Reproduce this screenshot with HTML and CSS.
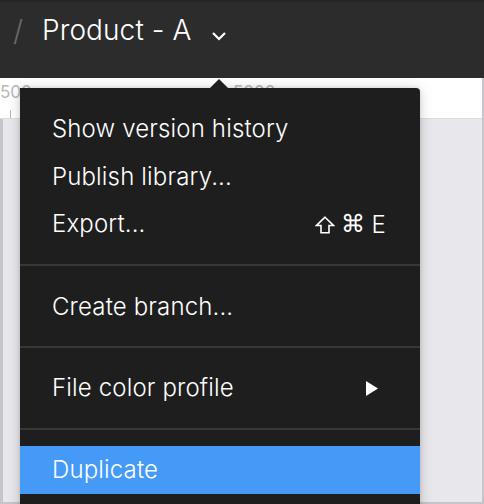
FILE: index.html
```html
<!DOCTYPE html>
<html>
<head>
<meta charset="utf-8">
<link rel="stylesheet" href="styles.css">
</head>
<body>
<div class="app">
  <header class="topbar">
    <span class="slash">/</span>
    <span class="title">Product - A</span>
    <svg class="chev" width="16" height="10" viewBox="0 0 16 10"><path d="M2 2 L8 8 L14 2" fill="none" stroke="#fff" stroke-width="2.2"/></svg>
  </header>
  <div class="ruler">
    <span class="rlabel r1">500</span>
    <span class="rlabel r2">5000</span>
    <span class="tick"></span>
  </div>
  <div class="canvas"></div>

  <div class="menu">
    <div class="caret"></div>
    <div class="group">
      <div class="item">Show version history</div>
      <div class="item">Publish library...</div>
      <div class="item"><span>Export...</span><span class="kbd"><svg class="shift" width="20" height="18" viewBox="0 0 20 18"><path d="M10 1.2 L18.5 9.5 L14 9.5 L14 16.8 L6 16.8 L6 9.5 L1.5 9.5 Z" fill="none" stroke="#fff" stroke-width="1.6" stroke-linejoin="miter"/></svg><span class="k">⌘</span><span>E</span></span></div>
    </div>
    <div class="sep"></div>
    <div class="group">
      <div class="item">Create branch...</div>
    </div>
    <div class="sep"></div>
    <div class="group">
      <div class="item"><span>File color profile</span><svg class="sub" width="12" height="15" viewBox="0 0 12 15"><path d="M0 0 L12 7.5 L0 15 Z" fill="#fff"/></svg></div>
    </div>
    <div class="sep"></div>
    <div class="group">
      <div class="item active">Duplicate</div>
    </div>
  </div>
</div>
</body>
</html>
```
FILE: styles.css
```css
html, body {
  margin: 0;
  padding: 0;
}
body {
  width: 484px;
  height: 504px;
  overflow: hidden;
  font-family: Inter, "Noto Sans", sans-serif;
  background: #c6c6ca;
}
.app {
  position: relative;
  width: 484px;
  height: 504px;
  display: flex;
  flex-direction: column;
  box-sizing: border-box;
  padding: 0 2px 2px 3px;
  background: #c6c6ca;
}
.topbar {
  margin: 0 -2px 0 -3px;
  height: 78px;
  box-sizing: border-box;
  background: #2c2c2c;
  border-top: 2px solid #242424;
  display: flex;
  align-items: center;
  padding: 0 0 20px 13px;
  color: #fff;
}
.slash {
  color: #6a6a6a;
  font-size: 29px;
  font-weight: 300;
  width: 29px;
}
.title {
  font-size: 28px;
  font-weight: 350;
  letter-spacing: 0.1px;
}
.chev {
  margin-left: 19px;
  margin-top: 12px;
}
.ruler {
  position: relative;
  height: 40px;
  margin-left: -3px;
  background: #fff;
  border-bottom: 1px solid #dcdce0;
  color: #b8b8b8;
  font-size: 17px;
}
.rlabel {
  position: absolute;
  top: 4px;
}
.r1 { left: 0; }
.r2 { left: 233px; }
.tick {
  position: absolute;
  left: 10px;
  bottom: 0;
  width: 1px;
  height: 8px;
  background: #b8b8b8;
}
.canvas {
  flex: 1;
  background: #e7e7ec;
}
.menu {
  position: absolute;
  left: 20px;
  top: 88px;
  width: 400px;
  height: 430px;
  background: #1e1e1e;
  border-radius: 0 4px 0 0;
  box-shadow: 0 2px 14px rgba(0,0,0,0.18), 0 0 4px rgba(0,0,0,0.12);
  color: #fff;
  padding: 16px 0;
  box-sizing: border-box;
  font-size: 24px;
  font-weight: 350;
  letter-spacing: 0.15px;
}
.caret {
  position: absolute;
  left: 190px;
  top: -9px;
  width: 0;
  height: 0;
  border-left: 9px solid transparent;
  border-right: 9px solid transparent;
  border-bottom: 9px solid #1e1e1e;
}
.item {
  height: 48px;
  display: flex;
  align-items: center;
  justify-content: space-between;
  padding: 0 34px 0 32px;
}
.item > span:first-child,
.item.active {
  line-height: 1;
}
.item.active {
  background: #449af6;
}
.sep {
  height: 2px;
  background: #383838;
  margin: 16px 0;
}
.kbd {
  display: flex;
  gap: 6px;
  align-items: center;
}
.shift {
  margin-top: 1px;
}
.k {
  font-family: "DejaVu Sans", sans-serif;
  font-size: 24px;
  line-height: 1;
}
.sub {
  margin-right: 8px;
}
```
